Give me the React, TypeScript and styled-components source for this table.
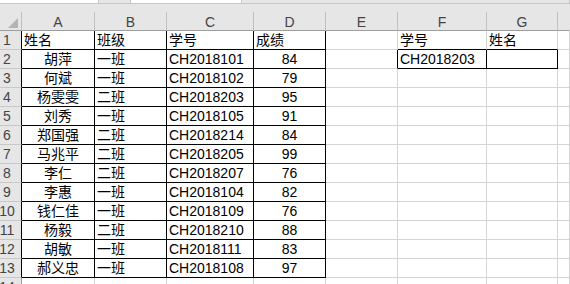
import React from "react";
import styled, { createGlobalStyle } from "styled-components";

const Global = createGlobalStyle`
  html, body { margin: 0; padding: 0; background: #fff; }
  body { width: 570px; height: 284px; overflow: hidden; }
`;

const Sheet = styled.div`
  width: 570px;
  height: 284px;
  overflow: hidden;
  display: flex;
  flex-direction: column;
  background: #fff;
  font-family: "Liberation Sans", "Noto Sans CJK SC", sans-serif;
  font-size: 14px;
`;

/* strip left from the formula bar above the sheet */
const BarStrip = styled.div`
  height: 12px;
  flex: none;
  background: #e6e6e6;
  display: flex;
  align-items: flex-start;
`;

const BarBox = styled.div<{ $w: number; $tone: "white" | "gray" }>`
  width: ${(p) => p.$w}px;
  height: 3px;
  flex: ${(p) => (p.$w === 0 ? "1" : "none")};
  background: ${(p) => (p.$tone === "white" ? "#ffffff" : "#e6e6e6")};
  border-right: 1px solid #c6c6c6;
  border-bottom: 1px solid #c6c6c6;
`;

const Grid = styled.div`
  display: grid;
  grid-template-columns: 22px 73px 72px 87px 72px 72px 89px 71px 1fr;
  grid-auto-rows: 19px;
`;

type Align = "left" | "center" | "right";

const Cell = styled.div<{
  $align?: Align;
  $right?: boolean;
  $bottom?: boolean;
}>`
  box-sizing: border-box;
  display: flex;
  align-items: flex-end;
  justify-content: ${(p) =>
    p.$align === "center" ? "center" : p.$align === "right" ? "flex-end" : "flex-start"};
  padding: 0 2px 0 2px;
  border-right: 1px solid ${(p) => (p.$right ? "#000" : "#d4d4d4")};
  border-bottom: 1px solid ${(p) => (p.$bottom ? "#000" : "#d4d4d4")};
  color: #000;
  line-height: 17px;
  white-space: nowrap;
  overflow: visible;
`;

const ColHead = styled.div<{ $last?: boolean }>`
  box-sizing: border-box;
  background: #e6e6e6;
  border-right: 1px solid ${(p) => (p.$last ? "#e6e6e6" : "#c0c0c0")};
  border-bottom: 1px solid #9e9e9e;
  color: #444;
  display: flex;
  align-items: center;
  justify-content: center;
  padding-top: 3px;
  line-height: 15px;
  font-family: "Liberation Sans", sans-serif;
`;

const Corner = styled.div`
  box-sizing: border-box;
  background: #e6e6e6;
  border-right: 1px solid #c0c0c0;
  border-bottom: 1px solid #9e9e9e;
  display: flex;
  align-items: flex-end;
  justify-content: flex-end;
  padding: 0 3px 2px 0;
`;

const RowHead = styled.div<{ $dark?: boolean }>`
  box-sizing: border-box;
  background: #e6e6e6;
  border-right: 1px solid ${(p) => (p.$dark ? "#000" : "#9e9e9e")};
  border-bottom: 1px solid #c8c8c8;
  color: #444;
  display: flex;
  align-items: flex-end;
  justify-content: center;
  padding-right: 7px;
  line-height: 17px;
  font-family: "Liberation Sans", sans-serif;
  white-space: nowrap;
  overflow: visible;
`;

const columns = ["A", "B", "C", "D", "E", "F", "G", ""];

const students: [string, string, string, number][] = [
  ["胡萍", "一班", "CH2018101", 84],
  ["何斌", "一班", "CH2018102", 79],
  ["杨雯雯", "二班", "CH2018203", 95],
  ["刘秀", "一班", "CH2018105", 91],
  ["郑国强", "二班", "CH2018214", 84],
  ["马兆平", "二班", "CH2018205", 99],
  ["李仁", "二班", "CH2018207", 76],
  ["李惠", "一班", "CH2018104", 82],
  ["钱仁佳", "一班", "CH2018109", 76],
  ["杨毅", "二班", "CH2018210", 88],
  ["胡敏", "一班", "CH2018111", 83],
  ["郝义忠", "一班", "CH2018108", 97],
];

type CellSpec = { text?: string | number; align?: Align; right?: boolean; bottom?: boolean };

function buildRow(r: number): CellSpec[] {
  // r is 1-based sheet row
  const inTable = r >= 1 && r <= 13;
  const cells: CellSpec[] = [];
  if (r === 1) {
    cells.push({ text: "姓名", right: true, bottom: true });
    cells.push({ text: "班级", right: true, bottom: true });
    cells.push({ text: "学号", right: true, bottom: true });
    cells.push({ text: "成绩", right: true, bottom: true });
  } else if (inTable) {
    const s = students[r - 2];
    cells.push({ text: s[0], align: "center", right: true, bottom: true });
    cells.push({ text: s[1], right: true, bottom: true });
    cells.push({ text: s[2], right: true, bottom: true });
    cells.push({ text: s[3], align: "center", right: true, bottom: true });
  } else {
    cells.push({}, {}, {}, {});
  }
  // E
  cells.push({ right: r === 2 });
  // F, G
  if (r === 1) {
    cells.push({ text: "学号", bottom: true });
    cells.push({ text: "姓名", bottom: true });
  } else if (r === 2) {
    cells.push({ text: "CH2018203", right: true, bottom: true });
    cells.push({ right: true, bottom: true });
  } else {
    cells.push({}, {});
  }
  // H
  cells.push({});
  return cells;
}

const CornerMark = () => (
  <svg width="10" height="10" viewBox="0 0 10 10">
    <polygon points="10,0 10,10 0,10" fill="#b4b4b4" />
  </svg>
);

export default function App() {
  const rows = Array.from({ length: 14 }, (_, i) => i + 1);
  return (
    <>
      <Global />
      <Sheet>
        <BarStrip>
          <BarBox $w={98} $tone="white" />
          <BarBox $w={31} $tone="gray" />
          <BarBox $w={110} $tone="white" />
          <BarBox $w={0} $tone="gray" />
        </BarStrip>
        <Grid>
          <Corner>
            <CornerMark />
          </Corner>
          {columns.map((c, i) => (
            <ColHead key={i} $last={i === columns.length - 1}>
              {c}
            </ColHead>
          ))}
          {rows.map((r) => (
            <React.Fragment key={r}>
              <RowHead $dark={r <= 13}>{r}</RowHead>
              {buildRow(r).map((c, i) => (
                <Cell key={i} $align={c.align} $right={c.right} $bottom={c.bottom}>
                  {c.text}
                </Cell>
              ))}
            </React.Fragment>
          ))}
        </Grid>
      </Sheet>
    </>
  );
}
